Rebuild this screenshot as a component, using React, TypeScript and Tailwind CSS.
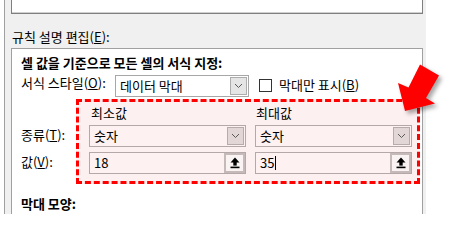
import React from "react";

const Chevron = () => (
  <svg width="9" height="6" viewBox="0 0 9 6">
    <polyline points="1,1 4.5,4.5 8,1" fill="none" stroke="#5a5a5a" strokeWidth="1" />
  </svg>
);

const UpIcon = () => (
  <svg width="10" height="12" viewBox="0 0 10 12">
    <polygon points="5,0.5 9.5,5.5 0.5,5.5" fill="#000" />
    <rect x="3.3" y="5" width="3.4" height="3.6" fill="#000" />
    <rect x="0.5" y="9.6" width="9" height="1.6" fill="#000" />
  </svg>
);

const U = ({ c }: { c: string }) => <span className="underline underline-offset-1">{c}</span>;

function PinkCombo({ text }: { text: string }) {
  return (
    <div className="h-[22px] border border-[#b5a8a8] bg-[#fdf1f1] flex items-center justify-between pl-[4px]">
      <span className="leading-4">{text}</span>
      <div className="w-[17px] h-[18px] mr-px border border-[#b8abab] bg-[#e2d6d6] flex items-center justify-center">
        <Chevron />
      </div>
    </div>
  );
}

function PinkValue({ text, caret }: { text: string; caret?: boolean }) {
  return (
    <div className="h-[22px] border border-[#b5a8a8] bg-[#fdf1f1] flex items-stretch justify-between pl-[4px]">
      <span className="leading-4 self-center flex items-center">
        {text}
        {caret && <span className="inline-block w-px h-[14px] bg-black ml-px" />}
      </span>
      <div className="w-[21px] border-2 border-[#c6b9b9] bg-[#faf3f3] flex items-center justify-center">
        <UpIcon />
      </div>
    </div>
  );
}

export default function App() {
  return (
    <div
      className="w-[456px] h-[214px] overflow-hidden relative flex bg-white text-[13px] text-black"
      style={{ fontFamily: '"Noto Sans CJK KR", "Noto Sans", sans-serif' }}
    >
      <div className="w-[4px] bg-white" />
      <div className="w-px bg-[#a0a0a0]" />
      <div className="w-[421px] bg-[#f0f0f0] flex flex-col pl-[6px] pr-[3px]">
        <div className="h-[14px] shrink-0 border-x border-b border-[#7f7f7f] bg-white shadow-[inset_0_-1px_0_#d0d0d0]" />
        <div className="mt-[15px] h-4 leading-4 pl-px shrink-0">
          규칙 설명 편집(<U c="E" />):
        </div>
        <div className="mt-[3px] flex-1 border-x border-t border-[#a0a0a0] bg-white pl-[9px] flex flex-col">
          <div className="mt-[6px] leading-4 font-bold">셀 값을 기준으로 모든 셀의 서식 지정:</div>
          <div className="mt-[4px] flex h-[22px] shrink-0">
            <div className="w-[94px] leading-4">
              서식 스타일(<U c="O" />):
            </div>
            <div className="w-[134px] h-[22px] border border-[#a7a7a7] bg-white flex items-center justify-between pl-[4px]">
              <span className="leading-4">데이터 막대</span>
              <div className="w-[17px] h-[18px] mr-px border border-[#adadad] bg-[#e5e5e5] flex items-center justify-center">
                <Chevron />
              </div>
            </div>
            <div className="ml-[10px] mt-[4px] w-[13px] h-[13px] border border-[#333333] bg-white" />
            <div className="ml-[7px] mt-[2px] leading-4">
              막대만 표시(<U c="B" />)
            </div>
          </div>
          <div className="mt-[2px] flex shrink-0">
            <div className="w-[55px] flex flex-col pt-[28px] gap-[11px]">
              <div className="leading-4">
                종류(<U c="T" />):
              </div>
              <div className="leading-4">
                값(<U c="V" />):
              </div>
            </div>
            <div className="w-[344px] border-[3px] border-dashed border-[#ff0000] bg-[#fdf0f0] pt-[3px] pb-[7px] pl-[10px] pr-[5px] grid grid-cols-2 gap-x-[9px]">
              <div className="flex flex-col">
                <div className="leading-4 pl-[2px] mb-[4px]">최소값</div>
                <PinkCombo text="숫자" />
                <div className="h-[5px]" />
                <PinkValue text="18" />
              </div>
              <div className="flex flex-col">
                <div className="leading-4 pl-px mb-[4px]">최대값</div>
                <PinkCombo text="숫자" />
                <div className="h-[5px]" />
                <PinkValue text="35" caret />
              </div>
            </div>
          </div>
          <div className="mt-[12px] leading-4 font-bold">막대 모양:</div>
        </div>
      </div>
      <div className="w-[30px] bg-white" />
      <svg
        className="absolute left-0 top-0 pointer-events-none"
        width="456"
        height="214"
        viewBox="0 0 456 214"
        style={{ filter: "drop-shadow(3px 3px 2px rgba(0,0,0,0.35))" }}
      >
        <polygon
          points="405,111 398,83 408.5,87.5 420,64.5 439,75.5 426,98 435,103.5"
          fill="#ff0000"
        />
      </svg>
    </div>
  );
}
